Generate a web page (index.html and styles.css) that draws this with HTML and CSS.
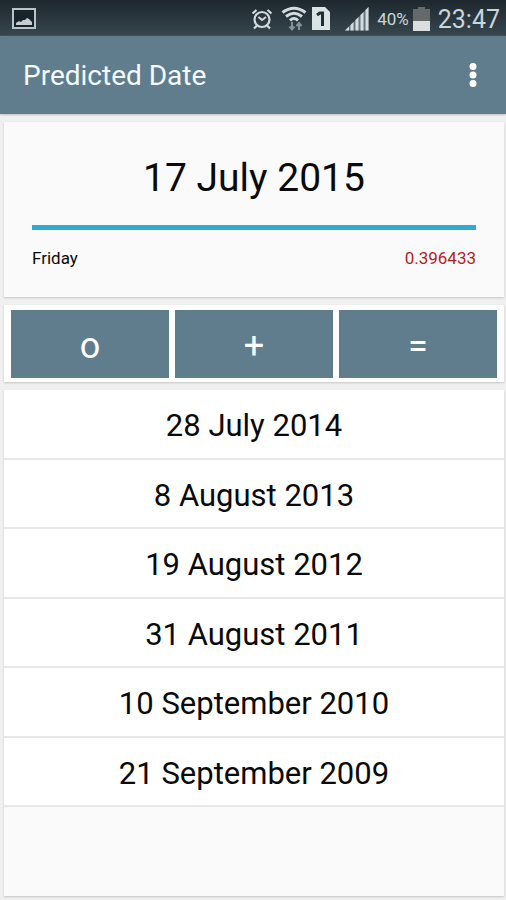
FILE: index.html
```html
<!DOCTYPE html>
<html lang="en">
<head>
<meta charset="utf-8">
<meta name="viewport" content="width=device-width, initial-scale=1">
<title>Predicted Date</title>
<link rel="stylesheet" href="styles.css">
</head>
<body>
<div class="status-bar">
  <svg class="picture-icon" width="24" height="22" viewBox="0 0 24 22" aria-hidden="true">
    <rect x="1" y="1" width="22" height="19" fill="#18232a" stroke="#b9c3c9" stroke-width="2"/>
    <path d="M4 17v-2l3-2 2 1 2-2 2 0 2-2 2 1 3 3v3z" fill="#c5cdd3"/>
  </svg>
  <div class="status-items">
    <svg class="alarm-icon" width="22" height="22" viewBox="0 0 22 22" fill="none" stroke="#d3dbde" aria-hidden="true">
      <circle cx="11" cy="11.500" r="7.500" stroke-width="2.200"/>
      <path d="M7.500 9l3.500 3 4-3" stroke-width="2"/>
      <path d="M1.500 5.500l4-3.500M20.500 5.500l-4-3.500M6 17.500l-3 3M16 17.500l3 3" stroke-width="2.200"/>
    </svg>
    <svg class="wifi-icon" width="26" height="26" viewBox="0 0 26 26" fill="none" aria-hidden="true">
      <g stroke="#d3dbde" stroke-width="3">
        <path d="M1.500 6.500Q13-2 24.500 6.500"/>
        <path d="M5 10.500Q13 4 21 10.500"/>
        <path d="M9 14.500Q13 10.500 17 14.500"/>
      </g>
      <g stroke="#84939b" stroke-width="2">
        <path d="M11 16v7M8.500 20.500l2.500 3 2.500-3M18 24v-7M15.500 20l2.500-3 2.500 3"/>
      </g>
    </svg>
    <svg class="sim-icon" width="20" height="24" viewBox="0 0 20 24" aria-hidden="true">
      <path d="M1 0h13l5 5v18H1z" fill="#dce3e5"/>
      <path d="M6 8l3-2h2.500v13" fill="none" stroke="#202d34" stroke-width="3"/>
    </svg>
    <svg class="signal-icon" width="24" height="24" viewBox="0 0 24 24" aria-hidden="true">
      <path d="M0 23.500L23.500 0v23.500z" fill="#65747c"/>
      <path d="M0 23.500l4-4v4zM5.500 18l3-3v8.500h-3zM10.500 13l3-3v13.500h-3zM15.500 8l3-3v18.500h-3zM20.500 3l3-3v23.500h-3z" fill="#d5dcdf"/>
    </svg>
    <span class="battery-level">40%</span>
    <svg class="battery-icon" width="17" height="24" viewBox="0 0 17 24" aria-hidden="true">
      <path d="M5 0h7v2h5v22H0V2h5z" fill="#65696c"/>
      <path d="M0 14h17v10H0z" fill="#dadedf"/>
    </svg>
    <time class="clock">23:47</time>
  </div>
</div>
<header class="app-bar">
  <h1 class="title">Predicted Date</h1>
  <button class="menu-button" type="button" aria-label="More options">
    <svg width="8" height="26" viewBox="0 0 8 26" fill="#fff" aria-hidden="true">
      <circle cx="4" cy="4.500" r="3.500"/><circle cx="4" cy="13" r="3.500"/><circle cx="4" cy="21.500" r="3.500"/>
    </svg>
  </button>
</header>
<main class="content">
  <section class="card prediction">
    <h2 class="prediction-date">17 July 2015</h2>
    <div class="divider"></div>
    <div class="details">
      <span>Friday</span>
      <span class="score">0.396433</span>
    </div>
  </section>
  <div class="card actions">
    <button class="action" type="button">o</button>
    <button class="action" type="button">+</button>
    <button class="action" type="button">=</button>
  </div>
  <section class="card history">
    <ul class="dates">
      <li class="date">28 July 2014</li>
      <li class="date">8 August 2013</li>
      <li class="date">19 August 2012</li>
      <li class="date">31 August 2011</li>
      <li class="date">10 September 2010</li>
      <li class="date">21 September 2009</li>
    </ul>
  </section>
</main>
</body>
</html>
```
FILE: styles.css
```css
* {
  box-sizing: border-box;
}

body {
  margin: 0;
  min-height: 100vh;
  display: flex;
  flex-direction: column;
  background: #f0f0f0;
  color: #0a0a0a;
  font-family: Roboto, "Liberation Sans", sans-serif;
}

h1,
h2,
ul {
  margin: 0;
  padding: 0;
  font-weight: 400;
}

button {
  border: 0;
  border-radius: 0;
  font-family: inherit;
}

svg {
  display: block;
  flex: none;
}

.status-bar {
  height: 36px;
  padding: 2px 6px 0 12px;
  display: flex;
  align-items: center;
  justify-content: space-between;
  background: linear-gradient(#1d282e, #37464e);
  color: #cbd5da;
}

.status-items {
  display: flex;
  align-items: center;
  gap: 4px;
}

.alarm-icon {
  margin-right: 4px;
}

.signal-icon {
  margin-left: 10px;
}

.battery-level {
  margin-left: 4px;
  font-size: 17px;
}

.clock {
  margin-left: 4px;
  font-size: 25px;
}

.app-bar {
  height: 78px;
  padding: 0 21px 0 23px;
  display: flex;
  align-items: center;
  justify-content: space-between;
  background: #607d8d;
  color: #f5faff;
  box-shadow: 0 1px 2px #bdbdbd;
}

.title {
  font-size: 28px;
}

.menu-button {
  padding: 8px;
  background: transparent;
}

.content {
  flex: 1;
  padding: 8px 2px 4px 4px;
  display: flex;
  flex-direction: column;
  gap: 8px;
}

.card {
  background: #fafafa;
  box-shadow: 0 1px 2px #c4c4c4;
}

.prediction {
  height: 175px;
  padding: 32px 28px 0;
}

.prediction-date {
  font-size: 39px;
  line-height: 48px;
  text-align: center;
}

.divider {
  height: 5px;
  margin-top: 23px;
  background: #31a9d2;
}

.details {
  margin-top: 18px;
  display: flex;
  justify-content: space-between;
  font-size: 17px;
  line-height: 20px;
}

.score {
  color: #b71c1c;
}

.actions {
  padding: 5px 7px 4px;
  display: grid;
  grid-template-columns: repeat(3, 1fr);
  gap: 6px;
  background: #fff;
}

.action {
  height: 68px;
  padding: 4px 0 0;
  background: #607d8d;
  color: #fff;
  font-size: 36px;
}

.history {
  flex: 1;
}

.dates {
  height: 417px;
  display: grid;
  grid-template-rows: repeat(6, 1fr);
  list-style: none;
}

.date {
  padding-top: 4px;
  display: flex;
  align-items: center;
  justify-content: center;
  border-bottom: 2px solid #e8e8e8;
  background: #fff;
  font-size: 31px;
}
```
